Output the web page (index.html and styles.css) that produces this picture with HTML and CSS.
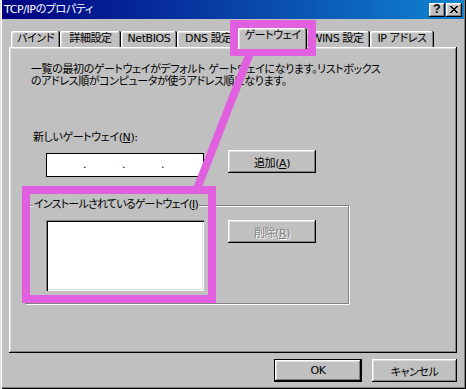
FILE: index.html
```html
<!DOCTYPE html>
<html lang="ja">
<head>
<meta charset="utf-8">
<title>TCP/IPのプロパティ</title>
<link rel="stylesheet" href="styles.css">
</head>
<body>
<div class="window">
  <div class="titlebar">
    <span class="title">TCP/IPのプロパティ</span>
    <div class="caption-buttons">
      <span class="cap-btn help">?</span>
      <span class="cap-btn close">
        <svg width="8" height="7" viewBox="0 0 8 7" shape-rendering="crispEdges">
          <path fill="#000" d="M0 0h2v1H0zM6 0h2v1H6zM1 1h2v1H1zM5 1h2v1H5zM2 2h4v1H2zM3 3h2v1H3zM2 4h4v1H2zM1 5h2v1H1zM5 5h2v1H5zM0 6h2v1H0zM6 6h2v1H6z"/>
        </svg>
      </span>
    </div>
  </div>

  <div class="tabs">
    <div class="tab tab-bind">バインド</div>
    <div class="tab tab-detail">詳細設定</div>
    <div class="tab tab-netbios">NetBIOS</div>
    <div class="tab tab-dns">DNS 設定</div>
    <div class="tab tab-gw active">ゲートウェイ</div>
    <div class="tab tab-wins">WINS 設定</div>
    <div class="tab tab-ip">IP アドレス</div>
  </div>

  <div class="panel">
    <p class="desc">一覧の最初のゲートウェイがデフォルト ゲートウェイになります。リストボックス<br>のアドレス順がコンピュータが使うアドレス順になります。</p>
    <div class="field-label">新しいゲートウェイ(<u>N</u>):</div>
    <div class="row">
      <div class="ip-box">
        <span class="octet"></span><span class="dot">.</span>
        <span class="octet"></span><span class="dot">.</span>
        <span class="octet"></span><span class="dot">.</span>
        <span class="octet"></span>
      </div>
      <button class="btn">追加(<u>A</u>)</button>
    </div>
    <div class="group">
      <span class="group-label">インストールされているゲートウェイ(<u>I</u>)</span>
      <div class="listbox"></div>
      <button class="btn disabled">削除(<u>R</u>)</button>
    </div>
  </div>

  <div class="footer">
    <button class="btn btn-ok default">OK</button>
    <button class="btn btn-cancel">キャンセル</button>
  </div>

  <svg class="annotation" width="466" height="389" viewBox="0 0 466 389">
    <g fill="none" stroke="#e060e0" stroke-width="8">
      <rect x="234" y="24" width="78" height="28"/>
      <rect x="26" y="190" width="186" height="109"/>
      <line x1="250" y1="53" x2="197" y2="189"/>
    </g>
  </svg>
</div>
</body>
</html>
```

FILE: styles.css
```css
* { box-sizing: border-box; }

html, body {
  margin: 0;
  padding: 0;
  background: #c0c0c0;
}

body {
  font-family: "DejaVu Sans", "Noto Sans CJK JP", sans-serif;
  font-size: 11px;
  letter-spacing: -0.4px;
  font-feature-settings: "palt";
  color: #000;
}

.window {
  position: relative;
  width: 466px;
  height: 389px;
  background: #c0c0c0;
  padding: 0 2px 2px 2px;
  box-shadow: inset 1px 0 #dfdfdf, inset 2px 0 #fff, inset -1px -1px #000, inset -2px -2px #808080;
}

.titlebar {
  height: 19px;
  display: flex;
  align-items: center;
  justify-content: space-between;
  padding: 0 2px 0 2px;
  background: linear-gradient(to right, #000080, #1084d0);
  color: #fff;
}

.title {
  line-height: 19px;
  white-space: nowrap;
}

.caption-buttons {
  display: flex;
  gap: 1px;
}

.cap-btn {
  width: 16px;
  height: 14px;
  display: flex;
  align-items: center;
  justify-content: center;
  background: #c0c0c0;
  color: #000;
  letter-spacing: 0;
  box-shadow: inset -1px -1px #000, inset 1px 1px #fff, inset -2px -2px #808080, inset 2px 2px #dfdfdf;
}

.help {
  font-family: "Liberation Sans", sans-serif;
  font-weight: bold;
  font-size: 12px;
  line-height: 14px;
  padding-bottom: 1px;
}

.close svg { display: block; margin-top: -1px; }

/* tabs */
.tabs {
  display: flex;
  align-items: flex-end;
  height: 19px;
  margin: 9px 0 0 7px;
  padding-left: 2px;
}

.tab {
  height: 16px;
  line-height: 16px;
  text-align: center;
  white-space: nowrap;
  background: #c0c0c0;
  border-radius: 2px 2px 0 0;
  box-shadow: inset -1px 0 #000, inset 1px 1px #fff, inset -2px 0 #808080, inset 2px 2px #dfdfdf;
}

.tab-bind { width: 49px; }
.tab-detail { width: 61px; }
.tab-netbios { width: 56px; }
.tab-dns { width: 63px; }
.tab-gw { width: 65px; }
.tab-wins { width: 65px; }
.tab-ip { width: 64px; }

.tab.active {
  position: relative;
  z-index: 2;
  width: 69px;
  height: 21px;
  margin: 0 -2px -2px;
}

/* panel */
.panel {
  position: relative;
  width: 448px;
  height: 306px;
  margin-left: 7px;
  padding-top: 17px;
  box-shadow: inset -1px -1px #000, inset 1px 1px #fff, inset -2px -2px #808080, inset 2px 2px #dfdfdf;
}

.desc {
  margin: 0 0 0 22px;
  line-height: 12px;
  white-space: nowrap;
}

.field-label {
  margin: 43px 0 0 24px;
  line-height: 14px;
}

.row {
  display: flex;
  align-items: flex-start;
  margin-top: 5px;
}

.ip-box {
  display: flex;
  width: 158px;
  height: 24px;
  margin: 3px 0 0 37px;
  background: #fff;
  border: 1px solid #000;
  line-height: 22px;
}

.octet { width: 36px; }
.dot { width: 3px; text-align: center; letter-spacing: 0; }

.btn {
  width: 88px;
  height: 23px;
  padding: 0;
  border: none;
  background: #c0c0c0;
  font: inherit;
  letter-spacing: inherit;
  color: #000;
  box-shadow: inset -1px -1px #000, inset 1px 1px #fff, inset -2px -2px #808080, inset 2px 2px #dfdfdf;
}

.row .btn { margin-left: 24px; }

.btn.disabled {
  color: #808080;
  text-shadow: 1px 1px #fff;
}

.btn.default {
  box-shadow: inset 0 0 0 1px #000, inset -2px -2px #000, inset 2px 2px #fff, inset -3px -3px #808080, inset 3px 3px #dfdfdf;
}

/* group box */
.group {
  position: relative;
  display: flex;
  align-items: flex-start;
  width: 324px;
  height: 99px;
  margin: 28px 0 0 16px;
  padding: 14px 0 0 20px;
  border: 1px solid #808080;
  box-shadow: inset 1px 1px #fff, 1px 1px #fff;
}

.group-label {
  position: absolute;
  top: -8px;
  left: 7px;
  padding: 0 1px;
  line-height: 14px;
  letter-spacing: -0.8px;
  background: #c0c0c0;
  white-space: nowrap;
}

.listbox {
  width: 158px;
  height: 71px;
  background: #fff;
  box-shadow: inset 1px 1px #808080, inset 2px 2px #000, inset -1px -1px #fff, inset -2px -2px #dfdfdf;
}

.group .btn { margin-left: 24px; }

/* footer */
.footer {
  display: flex;
  justify-content: flex-end;
  gap: 10px;
  margin-top: 6px;
  padding-right: 7px;
}

.btn-cancel { width: 85px; }

.annotation {
  position: absolute;
  left: 0;
  top: 0;
  pointer-events: none;
}
```
